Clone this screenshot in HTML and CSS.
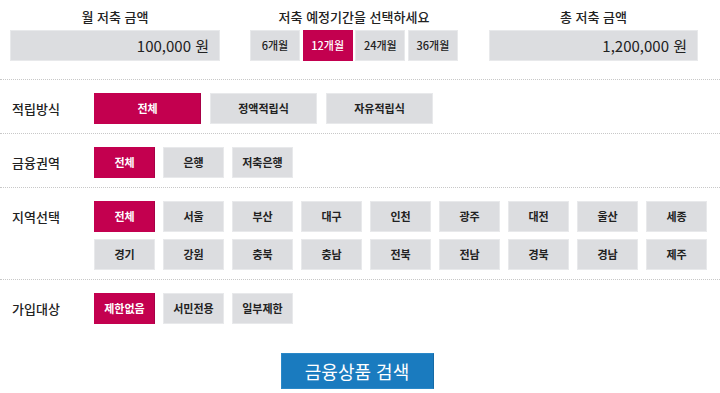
FILE: index.html
```html
<!DOCTYPE html>
<html lang="ko">
<head>
<meta charset="utf-8">
<link rel="stylesheet" href="styles.css">
</head>
<body>
<div class="page">
  <div class="top">
    <div class="col col-amount">
      <div class="col-title">월 저축 금액</div>
      <div class="amount-box">100,000 원</div>
    </div>
    <div class="col col-period">
      <div class="col-title">저축 예정기간을 선택하세요</div>
      <div class="periods">
        <span class="pbtn">6개월</span>
        <span class="pbtn on">12개월</span>
        <span class="pbtn">24개월</span>
        <span class="pbtn">36개월</span>
      </div>
    </div>
    <div class="col col-total">
      <div class="col-title">총 저축 금액</div>
      <div class="amount-box">1,200,000 원</div>
    </div>
  </div>

  <div class="row">
    <div class="row-label">적립방식</div>
    <div class="opts wide">
      <span class="btn on">전체</span>
      <span class="btn">정액적립식</span>
      <span class="btn">자유적립식</span>
    </div>
  </div>

  <div class="row">
    <div class="row-label">금융권역</div>
    <div class="opts">
      <span class="btn on">전체</span>
      <span class="btn">은행</span>
      <span class="btn">저축은행</span>
    </div>
  </div>

  <div class="row">
    <div class="row-label">지역선택</div>
    <div class="opts grid9">
      <span class="btn on">전체</span>
      <span class="btn">서울</span>
      <span class="btn">부산</span>
      <span class="btn">대구</span>
      <span class="btn">인천</span>
      <span class="btn">광주</span>
      <span class="btn">대전</span>
      <span class="btn">울산</span>
      <span class="btn">세종</span>
      <span class="btn">경기</span>
      <span class="btn">강원</span>
      <span class="btn">충북</span>
      <span class="btn">충남</span>
      <span class="btn">전북</span>
      <span class="btn">전남</span>
      <span class="btn">경북</span>
      <span class="btn">경남</span>
      <span class="btn">제주</span>
    </div>
  </div>

  <div class="row last">
    <div class="row-label">가입대상</div>
    <div class="opts">
      <span class="btn on">제한없음</span>
      <span class="btn">서민전용</span>
      <span class="btn">일부제한</span>
    </div>
  </div>

  <div class="search-wrap">
    <span class="search">금융상품 검색</span>
  </div>
</div>
</body>
</html>
```

FILE: styles.css
```css
* { box-sizing: border-box; }
html, body { margin: 0; padding: 0; background: #fff; }
body {
  font-family: "Noto Sans CJK KR", "Noto Sans", sans-serif;
  color: #222;
  width: 720px;
  height: 393px;
  overflow: hidden;
}
.page { width: 720px; }

.top {
  display: flex;
  padding: 7px 0 0 10px;
  height: 80px;
  border-bottom: 1px dotted #c8c8c8;
}
.col { display: flex; flex-direction: column; }
.col-amount { width: 210px; }
.col-period { width: 208px; margin-left: 30px; }
.col-total { width: 209px; margin-left: 31px; }
.col-title {
  text-align: center;
  font-size: 13px;
  line-height: 20px;
  height: 23px;
  font-weight: 500;
  color: #222;
}
.amount-box {
  height: 31px;
  background: #dcdde0;
  border: 1px solid #e8e9eb;
  text-align: right;
  padding-right: 10px;
  font-size: 15px;
  line-height: 29px;
  color: #222;
}
.periods { display: flex; gap: 2.67px; }
.pbtn {
  width: 50px;
  height: 31px;
  background: #dcdde0;
  border: 1px solid #e8e9eb;
  font-size: 11px;
  line-height: 29px;
  text-align: center;
  color: #222;
  font-weight: 500;
}
.pbtn.on { background: #c3004f; border-color: #c3004f; color: #fff; }

.row {
  display: flex;
  padding: 13px 0 9px 0;
  border-bottom: 1px dotted #c8c8c8;
}
.row.last { border-bottom: none; }
.row-label {
  width: 94px;
  padding-left: 12px;
  font-size: 13px;
  line-height: 31px;
  height: 31px;
  font-weight: 500;
  color: #222;
}
.opts { display: flex; gap: 8px; }
.opts.wide { gap: 9px; }
.opts.grid9 {
  display: grid;
  grid-template-columns: repeat(9, 61px);
  column-gap: 8px;
  row-gap: 7px;
}
.btn {
  width: 61px;
  height: 31px;
  background: #dcdde0;
  border: 1px solid #e8e9eb;
  font-size: 11px;
  line-height: 29px;
  text-align: center;
  color: #222;
  font-weight: 700;
}
.opts.wide .btn { width: 107px; }
.btn.on {
  background: #c3004f;
  border-color: #c3004f;
  border-right-color: #a60045;
  color: #fff;
}

.search-wrap {
  display: flex;
  justify-content: center;
  padding: 20px 6px 0 0;
}
.search {
  width: 153px;
  height: 36px;
  background: #1a7bbf;
  border: 1px solid #2a88c8;
  border-right-color: #156aa6;
  color: #fff;
  font-size: 18px;
  line-height: 34px;
  text-align: center;
}
```
